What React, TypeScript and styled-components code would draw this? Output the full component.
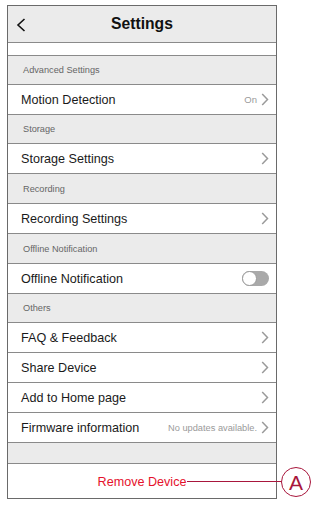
import React from "react";
import styled, { createGlobalStyle } from "styled-components";

const Global = createGlobalStyle`
  html, body { margin: 0; padding: 0; background: #ffffff; }
  body { font-family: "Liberation Sans", Arial, sans-serif; }
  * { box-sizing: border-box; }
`;

const Page = styled.div`
  position: relative;
  width: 318px;
  height: 508px;
  padding: 5px 0 0 7px;
`;

const Phone = styled.div`
  width: 270px;
  height: 494px;
  border: 1px solid #6a6a6a;
  background: #ebebeb;
  display: flex;
  flex-direction: column;
`;

const Header = styled.div`
  height: 37px;
  flex: none;
  border-bottom: 1px solid #8a8a8a;
  display: grid;
  grid-template-columns: 40px 1fr 40px;
  align-items: center;
`;

const BackButton = styled.div`
  display: flex;
  align-items: center;
  padding-left: 8px;
  padding-top: 1px;
`;

const Title = styled.div`
  text-align: center;
  font-size: 15.7px;
  font-weight: bold;
  color: #111;
`;

const Spacer = styled.div<{ $h: number; $white?: boolean }>`
  height: ${(p) => p.$h}px;
  flex: none;
  background: ${(p) => (p.$white ? "#ffffff" : "#ebebeb")};
  border-bottom: 1px solid #8a8a8a;
`;

const SectionHeader = styled.div<{ $tall?: boolean }>`
  height: ${(p) => (p.$tall ? 30 : 29)}px;
  flex: none;
  border-bottom: 1px solid #8a8a8a;
  display: flex;
  align-items: center;
  padding-left: 15px;
  font-size: 9.2px;
  color: #666;
`;

const Row = styled.div`
  height: 30px;
  flex: none;
  background: #ffffff;
  border-bottom: 1px solid #8a8a8a;
  display: flex;
  align-items: center;
  padding: 0 7px 0 13px;
`;

const RowTitle = styled.div`
  flex: 1;
  font-size: 12.6px;
  color: #1a1a1a;
`;

const RowValue = styled.span<{ $size: number }>`
  font-size: ${(p) => p.$size}px;
  color: #9a9a9a;
  margin-right: 4px;
`;

const Toggle = styled.div`
  position: relative;
  width: 27px;
  height: 15px;
  border-radius: 8px;
  background: #a9a9a9;
  margin-right: 0;
`;

const Knob = styled.div`
  position: absolute;
  left: 0;
  top: 0;
  width: 15px;
  height: 15px;
  border-radius: 50%;
  background: #ffffff;
  border: 1px solid #9a9a9a;
`;

const RemoveArea = styled.div`
  flex: 1;
  background: #ffffff;
  display: flex;
  align-items: center;
  justify-content: center;
  padding-top: 1px;
`;

const RemoveText = styled.span`
  font-size: 12.6px;
  color: #e5112c;
`;

const CalloutLine = styled.div`
  position: absolute;
  left: 187px;
  top: 481px;
  width: 95px;
  height: 1px;
  background: #a8163c;
`;

const CalloutCircle = styled.div`
  position: absolute;
  left: 281px;
  top: 467px;
  width: 30px;
  height: 30px;
  border-radius: 50%;
  border: 1px solid #a8163c;
  background: #ffffff;
  color: #a8163c;
  display: flex;
  align-items: center;
  justify-content: center;
  font-size: 21px;
  line-height: 1;
  padding-top: 1px;
`;

const Chevron = () => (
  <svg width="8" height="13" viewBox="0 0 8 13">
    <path d="M1.2 1 L6.5 6.5 L1.2 12" fill="none" stroke="#9a9a9a" strokeWidth="1.5" />
  </svg>
);

const BackChevron = () => (
  <svg width="10" height="14" viewBox="0 0 10 14">
    <path d="M8.5 1 L2 7 L8.5 13" fill="none" stroke="#111" strokeWidth="1.6" />
  </svg>
);

type Item = { title: string; value?: string; valueSize?: number; toggle?: boolean };

const NavRow = ({ title, value, valueSize, toggle }: Item) => (
  <Row>
    <RowTitle>{title}</RowTitle>
    {value && <RowValue $size={valueSize ?? 9.5}>{value}</RowValue>}
    {toggle ? (
      <Toggle>
        <Knob />
      </Toggle>
    ) : (
      <Chevron />
    )}
  </Row>
);

export default function App() {
  return (
    <>
      <Global />
      <Page>
        <Phone>
          <Header>
            <BackButton>
              <BackChevron />
            </BackButton>
            <Title>Settings</Title>
            <div />
          </Header>
          <Spacer $h={13} $white />
          <SectionHeader>Advanced Settings</SectionHeader>
          <NavRow title="Motion Detection" value="On" valueSize={9.5} />
          <SectionHeader>Storage</SectionHeader>
          <NavRow title="Storage Settings" />
          <SectionHeader $tall>Recording</SectionHeader>
          <NavRow title="Recording Settings" />
          <SectionHeader $tall>Offline Notification</SectionHeader>
          <NavRow title="Offline Notification" toggle />
          <SectionHeader>Others</SectionHeader>
          <NavRow title="FAQ &amp; Feedback" />
          <NavRow title="Share Device" />
          <NavRow title="Add to Home page" />
          <NavRow title="Firmware information" value="No updates available." valueSize={9.25} />
          <Spacer $h={21} />
          <RemoveArea>
            <RemoveText>Remove Device</RemoveText>
          </RemoveArea>
        </Phone>
        <CalloutLine />
        <CalloutCircle>A</CalloutCircle>
      </Page>
    </>
  );
}
